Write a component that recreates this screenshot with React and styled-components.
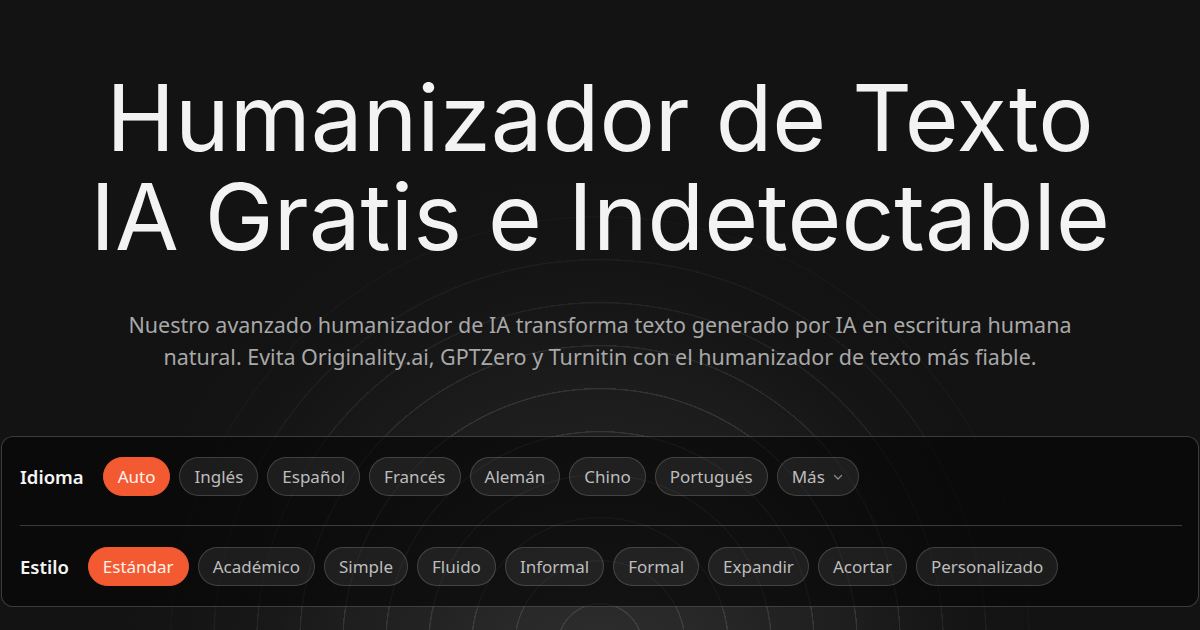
import React from "react";
import styled, { createGlobalStyle } from "styled-components";

const Global = createGlobalStyle`
  html, body { margin: 0; padding: 0; background: #121212; }
  * { box-sizing: border-box; }
`;

const Page = styled.div`
  width: 1200px;
  height: 630px;
  overflow: hidden;
  display: flex;
  flex-direction: column;
  align-items: center;
  font-family: "Noto Sans", "Open Sans", sans-serif;
  background:
    radial-gradient(circle at 600px 646px, rgba(19,19,19,0) 0px, rgba(19,19,19,0) 260px, rgba(19,19,19,0.5) 360px, rgba(19,19,19,1) 470px),
    repeating-radial-gradient(circle at 600px 646px, rgba(255,255,255,0) 0px, rgba(255,255,255,0) 41.3px, rgba(255,255,255,0.1) 42px, rgba(255,255,255,0.1) 43px),
    radial-gradient(circle at 600px 690px, #303030 0px, #1f1f1f 240px, rgba(20,20,20,0) 470px),
    linear-gradient(110deg, #1d1d1d 0%, #151515 45%, #0f0f0f 100%);
`;

const Title = styled.h1`
  margin: 68px 0 0;
  font-family: Inter, "Liberation Sans", sans-serif;
  font-weight: 400;
  font-size: 92.5px;
  line-height: 99px;
  color: #f3f3f3;
  text-align: center;
`;

const Subtitle = styled.p`
  margin: 43px 0 0;
  width: 980px;
  font-size: 21.5px;
  line-height: 32px;
  color: #a8a8a8;
  text-align: center;
`;

const Panel = styled.div`
  margin-top: 63px;
  width: 1198px;
  border: 1px solid rgba(255, 255, 255, 0.2);
  border-radius: 12px;
  background: rgba(6, 6, 6, 0.66);
  padding: 0 14px 0 18px;
  display: flex;
  flex-direction: column;
`;

const Row = styled.div`
  display: flex;
  align-items: center;
  gap: 9px;
  padding: ${(p) => p.$pad};
`;

const Label = styled.span`
  font-size: 18.5px;
  font-weight: 600;
  color: #f5f5f5;
  margin-right: ${(p) => p.$gap}px;
`;

const Divider = styled.div`
  height: 1px;
  background: rgba(255, 255, 255, 0.2);
  margin-right: 2px;
`;

const Chip = styled.button`
  height: 39px;
  padding: 0 14px;
  border-radius: 20px;
  font-family: "Noto Sans", sans-serif;
  font-size: 17px;
  display: inline-flex;
  align-items: center;
  gap: 7px;
  cursor: pointer;
  border: 1px solid ${(p) => (p.$active ? "#f45a31" : "rgba(255,255,255,0.16)")};
  background: ${(p) => (p.$active ? "#f45a31" : "rgba(255,255,255,0.075)")};
  color: ${(p) => (p.$active ? "#fff3ee" : "#bdbdbd")};
`;

const Chevron = () => (
  <svg width="12" height="12" viewBox="0 0 12 12" fill="none">
    <path d="M2.5 4.5 L6 8 L9.5 4.5" stroke="#8a8a8a" strokeWidth="1.3" strokeLinecap="round" strokeLinejoin="round" />
  </svg>
);

const langs = ["Inglés", "Español", "Francés", "Alemán", "Chino", "Portugués"];
const styles = ["Académico", "Simple", "Fluido", "Informal", "Formal", "Expandir", "Acortar", "Personalizado"];

export default function App() {
  return (
    <>
      <Global />
      <Page>
        <Title>
          Humanizador de Texto
          <br />
          IA Gratis e Indetectable
        </Title>
        <Subtitle>
          Nuestro avanzado humanizador de IA transforma texto generado por IA en escritura humana natural. Evita
          Originality.ai, GPTZero y Turnitin con el humanizador de texto más fiable.
        </Subtitle>
        <Panel>
          <Row $pad="20px 0 29px">
            <Label $gap={10}>Idioma</Label>
            <Chip $active>Auto</Chip>
            {langs.map((l) => (
              <Chip key={l}>{l}</Chip>
            ))}
            <Chip>
              Más <Chevron />
            </Chip>
          </Row>
          <Divider />
          <Row $pad="21px 0 20px">
            <Label $gap={10}>Estilo</Label>
            <Chip $active>Estándar</Chip>
            {styles.map((s) => (
              <Chip key={s}>{s}</Chip>
            ))}
          </Row>
        </Panel>
      </Page>
    </>
  );
}
